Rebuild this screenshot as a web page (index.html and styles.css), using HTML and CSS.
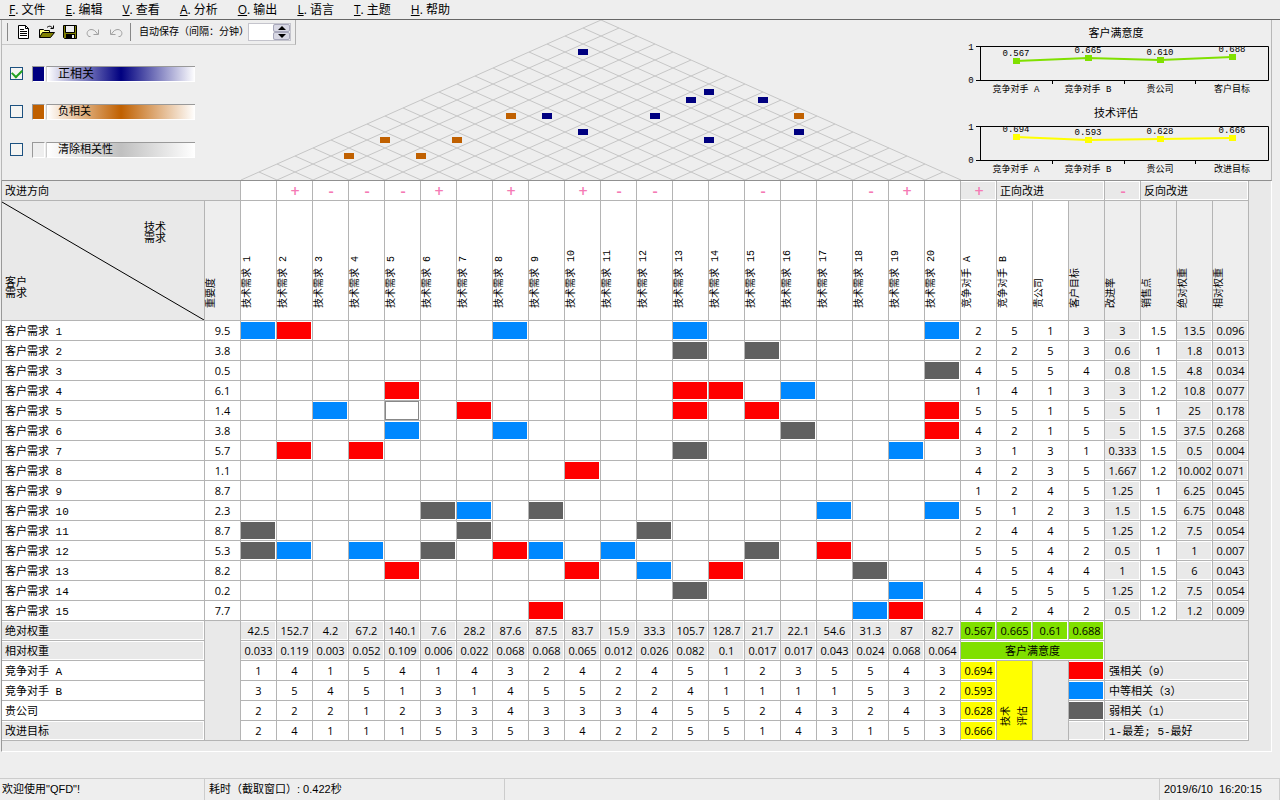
FILE: index.html
```html
<!DOCTYPE html>
<html lang="zh-CN">
<head>
<meta charset="utf-8">
<title>QFD</title>
<link rel="stylesheet" href="styles.css">
</head>
<body>
<nav class="menu">
  <button><u>F</u>. 文件</button><button><u>E</u>. 编辑</button><button><u>V</u>. 查看</button><button><u>A</u>. 分析</button><button><u>O</u>. 输出</button><button><u>L</u>. 语言</button><button><u>T</u>. 主题</button><button><u>H</u>. 帮助</button>
</nav>
<main class="house">
  <section class="top">
    <div class="controls">
      <div class="toolbar">
        <button class="tool" aria-label="新建"><svg width="16" height="16" viewBox="0 0 16 16"><path d="M2.500 1.500h7l3 3v10h-10z" fill="#fff" stroke="#000"/><path d="M9.500 1.500v3h3M4 5.500h4M4 7.500h7M4 9.500h7M4 11.500h7" fill="none" stroke="#000"/></svg></button>
        <button class="tool" aria-label="打开"><svg width="16" height="16" viewBox="0 0 16 16"><path d="M.5 13.500v-8h4l1 1h5v3" fill="#ffff80" stroke="#000"/><path d="M.5 13.500l3-5h12l-4 5z" fill="#808000" stroke="#000"/><path d="M8 3.500c2-2 4-1.500 5.500.5M14.500 1.500v3h-3" fill="none" stroke="#000"/></svg></button>
        <button class="tool" aria-label="保存"><svg width="16" height="16" viewBox="0 0 16 16"><path d="M1.500 1.500h13v13h-12l-1-1z" fill="#808000" stroke="#000"/><path d="M4 2h8v6H4z" fill="#eee"/><path d="M4 10h9v4H4z" fill="#000"/><path d="M10 11h2v3h-2z" fill="#eee"/><path d="M3.500 2v6.500h9V2" fill="none" stroke="#000"/></svg></button>
        <button class="tool" aria-label="重做" disabled><svg width="16" height="16" viewBox="0 0 16 16"><path d="M5.500 12.500H4C1 11 1.500 6 6 5.500c3 0 4.500 1.500 6.500 4.500M13.500 5.500v5H8.500" fill="none" stroke="#a0a0a0"/></svg></button>
        <button class="tool" aria-label="撤销" disabled><svg width="16" height="16" viewBox="0 0 16 16"><path d="M10.500 12.500H12c3-1.500 2.500-6.500-2-7C7 5.500 5.500 7 3.500 10M2.500 5.500v5h5" fill="none" stroke="#a0a0a0"/></svg></button>
        <label class="autosave" for="interval">自动保存（间隔：分钟）</label>
        <span class="spin"><input id="interval" type="text"><span class="arrows"><button aria-label="增加"><svg width="8" height="4" viewBox="0 0 8 4"><path d="M4 0l4 4H0z"/></svg></button><button aria-label="减少"><svg width="8" height="4" viewBox="0 0 8 4"><path d="M0 0h8L4 4z"/></svg></button></span></span>
      </div>
      <div class="modes">
        <label class="mode mode-pos"><input type="checkbox" checked><span class="chip"></span><span class="bar">正相关</span></label>
        <label class="mode mode-neg"><input type="checkbox"><span class="chip"></span><span class="bar">负相关</span></label>
        <label class="mode mode-clear"><input type="checkbox"><span class="chip"></span><span class="bar">清除相关性</span></label>
      </div>
    </div>
    <svg class="roof" id="roof" width="720" height="160" viewBox="0 0 720 160"></svg>
    <div class="charts" id="charts"></div>
  </section>
  <div class="panel">
    <table class="matrix">
      <colgroup><col class="col-name"><col class="col-num" span="29"></colgroup>
      <thead id="head">
      </thead>
      <tbody id="rows"></tbody>
    </table>
  </div>
</main>
<footer class="status">
  <span class="status-msg">欢迎使用"QFD"!</span>
  <span class="status-time">耗时（截取窗口）: 0.422秒</span>
  <span class="status-fill"></span>
  <span class="status-clock">2019/6/10&nbsp; 16:20:15</span>
</footer>
<script src="app.js"></script>
</body>
</html>
```
FILE: styles.css
```css
* { box-sizing: border-box; }
body {
  margin: 0;
  min-height: 100vh;
  display: flex;
  flex-direction: column;
  background: #eee;
  color: #000;
  font: 11px/14px "Liberation Mono", "Noto Sans CJK SC", monospace;
}
button { border: 0; padding: 0; background: none; font: inherit; color: inherit; }

.menu {
  display: flex;
  gap: 20px;
  height: 20px;
  padding-left: 9px;
  border-bottom: 1px solid #666;
  font: 12px/18px "Open Sans", "Noto Sans CJK SC", sans-serif;
}

.house { margin: 0 8px 0 1px; }
.top {
  display: flex;
  border-left: 1px solid #b8b8b8;
  border-right: 1px solid #b8b8b8;
  border-bottom: 1px solid #909090;
}
.controls { flex: 1; min-width: 239px; width: 239px; }
.toolbar {
  display: flex;
  align-items: center;
  width: 294px;
  height: 25px;
  padding-left: 5px;
  border-right: 1px solid #b0b0b0;
  border-bottom: 1px solid #c8c8c8;
  position: relative;
}
.tool { width: 23px; height: 18px; display: grid; place-items: center; }
.tool:first-child { width: 28px; padding-left: 5px; border-left: 1px solid #888; }
.autosave {
  border-left: 1px solid #888;
  margin-left: 3px;
  padding: 2px 0 0 8px;
  width: 118px;
  font-size: 10px;
  line-height: 16px;
  white-space: nowrap;
}
.spin { display: flex; width: 43px; height: 18px; border: 1px solid #c4c4cc; }
.spin input { flex: 1; min-width: 0; border: 0; padding: 0; background: #fff; }
.arrows { display: grid; width: 17px; }
.arrows button { display: grid; place-items: center; background: #d8d8e4; border: 1px solid #a8a8bc; border-radius: 2px; height: 8px; }

.modes { display: grid; gap: 22px; padding: 21px 0 0 8px; }
.mode { display: flex; align-items: center; height: 16px; }
.mode input {
  appearance: none;
  width: 13px;
  height: 13px;
  margin: 0 9px 1px 0;
  border: 1px solid #1c5180;
  background: #f4f4f2;
  display: grid;
  place-items: center;
}
.mode input:checked::before {
  content: "";
  width: 8px;
  height: 5px;
  margin-top: -2px;
  border: solid #21a121;
  border-width: 0 0 2px 2px;
  transform: rotate(-45deg);
}
.chip { width: 13px; height: 16px; border: 1px solid #999; border-right-color: #fff; border-bottom-color: #fff; margin-right: 1px; }
.bar { width: 149px; height: 16px; line-height: 15px; padding-left: 11px; border-top: 1px solid #999; border-left: 1px solid #ccc; border-bottom: 1px solid #fff; }
.mode-pos .chip { background: #000080; }
.mode-pos .bar { background: linear-gradient(90deg, #fff, #000080 50%, #fff); font-size: 12px; line-height: 17px; }
.mode-neg .chip { background: #c06000; }
.mode-neg .bar { background: linear-gradient(90deg, #fff, #c06000 50%, #fff); }
.mode-clear .bar { background: linear-gradient(90deg, #fff, #c0c0c0 50%, #fff); }

.roof { flex: none; display: block; }
.roof path { stroke: #c6c6c6; fill: none; }
.roof .pos { fill: #000080; }
.roof .neg { fill: #c06000; }
.charts { width: 310px; flex: none; }
.chart { display: block; }
.chart text { text-anchor: middle; font-size: 9px; }
.chart .title { font-size: 11px; }
.chart .frame { fill: none; stroke: #000; }
.chart-0 { --line: #80e000; }
.chart-1 { --line: #ffff00; }
.chart polyline { fill: none; stroke: var(--line); stroke-width: 2; }
.chart .dot { fill: var(--line); }

.panel {
  padding: 0 22px 10px 0;
  background: #e9e9e9;
  border-left: 1px solid #999;
  border-right: 1px solid #fff;
  border-bottom: 1px solid #fff;
}
.matrix { width: 100%; table-layout: fixed; border-collapse: separate; border-spacing: 0; }
.col-num { width: 36px; }
.matrix td, .matrix th {
  height: 20px;
  padding: 0;
  border-right: 1px solid #b4b4b4;
  border-bottom: 1px solid #b4b4b4;
  background: #fff;
  box-shadow: inset 0 1px #fff, inset -1px -1px #fff;
  text-align: center;
  font: 11px/18px "Open Sans", sans-serif;
  white-space: nowrap;
}
.matrix .name {
  padding: 2px 0 0 3px;
  text-align: left;
  font: 11px/16px "Liberation Mono", "Noto Sans CJK SC", monospace;
}
.matrix .legend { padding-left: 4px; }
.matrix .center { text-align: center; padding-left: 0; }
.matrix .calc { background: #e9e9e9; }
.matrix .soft { background: #eee; }
.matrix .strong { background: #ff0000; }
.matrix .medium { background: #0088ff; }
.matrix .weak { background: #606060; }
.matrix .green { background: #80e000; }
.matrix .yellow { background: #ffff00; }
.matrix .plain, .matrix .soft { box-shadow: none; }
.matrix .current::before { content: ""; display: block; height: 17px; margin-right: 1px; border: 1px solid #888; }
.matrix .sign { color: #f57ab4; font-size: 16px; font-weight: 600; line-height: 16px; padding-left: 1px; }
.matrix .vert { height: 120px; vertical-align: bottom; text-align: left; }
.vert span, .side span {
  display: inline-block;
  writing-mode: vertical-rl;
  text-orientation: sideways;
  transform: rotate(180deg);
  font: 10px/14px "Liberation Mono", "Noto Sans CJK SC", monospace;
  padding-top: 12px;
  vertical-align: bottom;
}
.matrix .side { vertical-align: bottom; }
.side span { line-height: 17px; padding-top: 14px; }
.matrix .corner { background: #e9e9e9; box-shadow: none; }
.corner-box { display: flex; justify-content: space-between; height: 119px; position: relative; font: 11px/11px "Liberation Mono", "Noto Sans CJK SC", monospace; }
.corner-box svg { position: absolute; inset: 0; width: 100%; height: 100%; }
.corner-rows { align-self: flex-end; padding: 0 0 20px 3px; }
.corner-cols { padding: 22px 38px 0 0; }

.status {
  margin-top: auto;
  display: flex;
  height: 22px;
  border-top: 1px solid #ccc;
  font: 11px/21px "Liberation Sans", "Noto Sans CJK SC", sans-serif;
}
.status span { padding-left: 4px; border-right: 1px solid #ccc; white-space: nowrap; }
.status .status-msg { width: 205px; padding-left: 2px; }
.status-time { width: 300px; }
.status-fill { flex: 1; }
.status-clock { width: 120px; }
```
FILE: app.js
```js
const join = (parts) => parts.join("");
const COLS = 20;

// Correlation roof: one line per column boundary in each direction.
const lines = [];
for (let k = 0; k <= COLS; k++) {
  const x = 36 * k;
  lines.push(`M${x} 160L${x + 18 * (COLS - k)} ${8 * k}`);
  lines.push(`M${x} 160L${x - 18 * k} ${160 - 8 * k}`);
}
const pos = [[342, 32], [468, 72], [450, 80], [522, 80], [306, 96], [414, 96], [342, 112], [558, 112], [468, 120]];
const neg = [[270, 96], [558, 96], [144, 120], [216, 120], [108, 136], [180, 136]];
const mark = (cls) => ([x, y]) => `<rect class="${cls}" x="${x - 5}" y="${y - 3}" width="10" height="6"/>`;
document.getElementById("roof").innerHTML =
  `<path d="${lines.join("")}"/>` + join(pos.map(mark("pos"))) + join(neg.map(mark("neg")));

// Score charts.
const charts = [
  { title: "客户满意度", names: ["竞争对手 A", "竞争对手 B", "贵公司", "客户目标"], values: [0.567, 0.665, 0.61, 0.688] },
  { title: "技术评估", names: ["竞争对手 A", "竞争对手 B", "贵公司", "改进目标"], values: [0.694, 0.593, 0.628, 0.666] },
];
document.getElementById("charts").innerHTML = join(charts.map((c, n) => {
  const pts = c.values.map((v, i) => [35 + 72 * i, Math.round(33 - 33 * v)]);
  return `<svg class="chart chart-${n}" width="310" height="80" viewBox="0 0 310 80">
    <text class="title" x="155" y="17">${c.title}</text>
    <path class="frame" d="M15 26.500H307.500V60.500H15M19.500 26.500V60.500M91.500 60v4M163.500 60v4M234.500 60v4"/>
    <text x="10" y="30">1</text><text x="10" y="63">0</text>
    <svg x="20" y="27" width="287" height="33">
      <polyline points="${pts.map((p) => p.join()).join(" ")}"/>
      ${join(pts.map(([x, y], i) => `<rect class="dot" x="${x - 3}" y="${y - 3}" width="7" height="6"/><text x="${x}" y="${y - 5}">${c.values[i].toFixed(3)}</text>`))}
    </svg>
    ${join(c.names.map((t, i) => `<text x="${55 + 72 * i}" y="72">${t}</text>`))}
  </svg>`;
}));

// Matrix header.
const signs = { 2: "+", 3: "-", 4: "-", 5: "-", 6: "+", 8: "+", 10: "+", 11: "-", 12: "-", 15: "-", 18: "-", 19: "+" };
const techs = Array.from({ length: COLS }, (_, i) => i + 1);
const td = (cls, text = "", attrs = "") => `<td class="${cls}" ${attrs}>${text}</td>`;
const vert = (text, cls = "") => `<th class="vert ${cls}" scope="col"><span>${text}</span></th>`;
document.getElementById("head").innerHTML =
  `<tr>${td("name calc plain", "改进方向", 'colspan="2"')}${techs.map((n) => td("sign", signs[n])).join("")}` +
  td("sign calc", "+") + td("name calc", "正向改进", 'colspan="3"') +
  td("sign calc", "-") + td("name calc", "反向改进", 'colspan="3"') + "</tr>" +
  `<tr><th class="corner"><div class="corner-box"><svg viewBox="0 0 202 119" preserveAspectRatio="none"><path d="M0 1L202 119" stroke="#000"/></svg><span class="corner-rows">客户<br>需求</span><span class="corner-cols">技术<br>需求</span></div></th>` +
  vert("重要度", "soft") + techs.map((n) => vert("技术需求 " + n)).join("") +
  ["竞争对手 A", "竞争对手 B", "贵公司"].map((t) => vert(t)).join("") +
  ["客户目标", "改进率", "销售点", "绝对权重", "相对权重"].map((t) => vert(t, "soft")).join("") + "</tr>";

// Requirement rows: importance | relations | scores.
const kinds = { r: "strong", b: "medium", g: "weak", c: "current" };
const needs = [
  "9.5|1b 2r 8b 13b 20b|2 5 1 3 3 1.5 13.5 0.096",
  "3.8|13g 15g|2 2 5 3 0.6 1 1.8 0.013",
  "0.5|20g|4 5 5 4 0.8 1.5 4.8 0.034",
  "6.1|5r 13r 14r 16b|1 4 1 3 3 1.2 10.8 0.077",
  "1.4|3b 5c 7r 13r 15r 20r|5 5 1 5 5 1 25 0.178",
  "3.8|5b 8b 16g 20r|4 2 1 5 5 1.5 37.5 0.268",
  "5.7|2r 4r 13g 19b|3 1 3 1 0.333 1.5 0.5 0.004",
  "1.1|10r|4 2 3 5 1.667 1.2 10.002 0.071",
  "8.7||1 2 4 5 1.25 1 6.25 0.045",
  "2.3|6g 7b 9g 17b 20b|5 1 2 3 1.5 1.5 6.75 0.048",
  "8.7|1g 7g 12g|2 4 4 5 1.25 1.2 7.5 0.054",
  "5.3|1g 2b 4b 6g 8r 9b 11b 15g 17r|5 5 4 2 0.5 1 1 0.007",
  "8.2|5r 10r 12b 14r 18g|4 5 4 4 1 1.5 6 0.043",
  "0.2|13g 19b|4 5 5 5 1.25 1.2 7.5 0.054",
  "7.7|9r 18b 19r|4 2 4 2 0.5 1.2 1.2 0.009",
];
const needRows = needs.map((line, i) => {
  const [weight, rel, scores] = line.split("|");
  const map = Object.fromEntries(rel.split(" ").map((r) => [parseInt(r, 10), kinds[r.slice(-1)]]));
  return `<tr>${td("name", "客户需求 " + (i + 1))}${td("", weight)}` +
    techs.map((n) => td(map[n] || "")).join("") +
    scores.split(" ").map((s, k) => td([4, 6, 7].includes(k) ? "calc" : "", s)).join("") + "</tr>";
});

// Summary rows.
const sums = [
  ["绝对权重", "42.5 152.7 4.2 67.2 140.1 7.6 28.2 87.6 87.5 83.7 15.9 33.3 105.7 128.7 21.7 22.1 54.6 31.3 87 82.7",
    ["0.567", "0.665", "0.61", "0.688"].map((v) => td("green", v)).join("") + td("calc plain", "", 'colspan="4" rowspan="2"')],
  ["相对权重", "0.033 0.119 0.003 0.052 0.109 0.006 0.022 0.068 0.068 0.065 0.012 0.026 0.082 0.1 0.017 0.017 0.043 0.024 0.068 0.064",
    td("name center green", "客户满意度", 'colspan="4"')],
  ["竞争对手 A", "1 4 1 5 4 1 4 3 2 4 2 4 5 1 2 3 5 5 4 3",
    td("yellow", "0.694") + td("yellow side plain", "<span>技术<br>评估</span>", 'rowspan="4"') + td("calc plain", "", 'rowspan="4"') +
    td("strong") + td("name legend calc", "强相关（9）", 'colspan="4"')],
  ["竞争对手 B", "3 5 4 5 1 3 1 4 5 5 2 2 4 1 1 1 1 5 3 2",
    td("yellow", "0.593") + td("medium") + td("name legend calc", "中等相关（3）", 'colspan="4"')],
  ["贵公司", "2 2 2 1 2 3 3 4 3 3 3 4 5 5 2 4 3 2 4 3",
    td("yellow", "0.628") + td("weak") + td("name legend calc", "弱相关（1）", 'colspan="4"')],
  ["改进目标", "2 4 1 1 1 5 3 5 3 4 2 2 5 5 1 4 3 1 5 3",
    td("yellow", "0.666") + td("calc") + td("name legend calc", "1-最差; 5-最好", 'colspan="4"')],
];
const sumRows = sums.map(([name, values, tail], i) =>
  `<tr>${td("name" + ([0, 1, 5].includes(i) ? " calc" : ""), name)}${i ? "" : td("calc plain", "", 'rowspan="6"')}` +
  values.split(" ").map((v) => td(i < 2 ? "calc" : "", v)).join("") + tail + "</tr>");

document.getElementById("rows").innerHTML = needRows.join("") + sumRows.join("");
```
